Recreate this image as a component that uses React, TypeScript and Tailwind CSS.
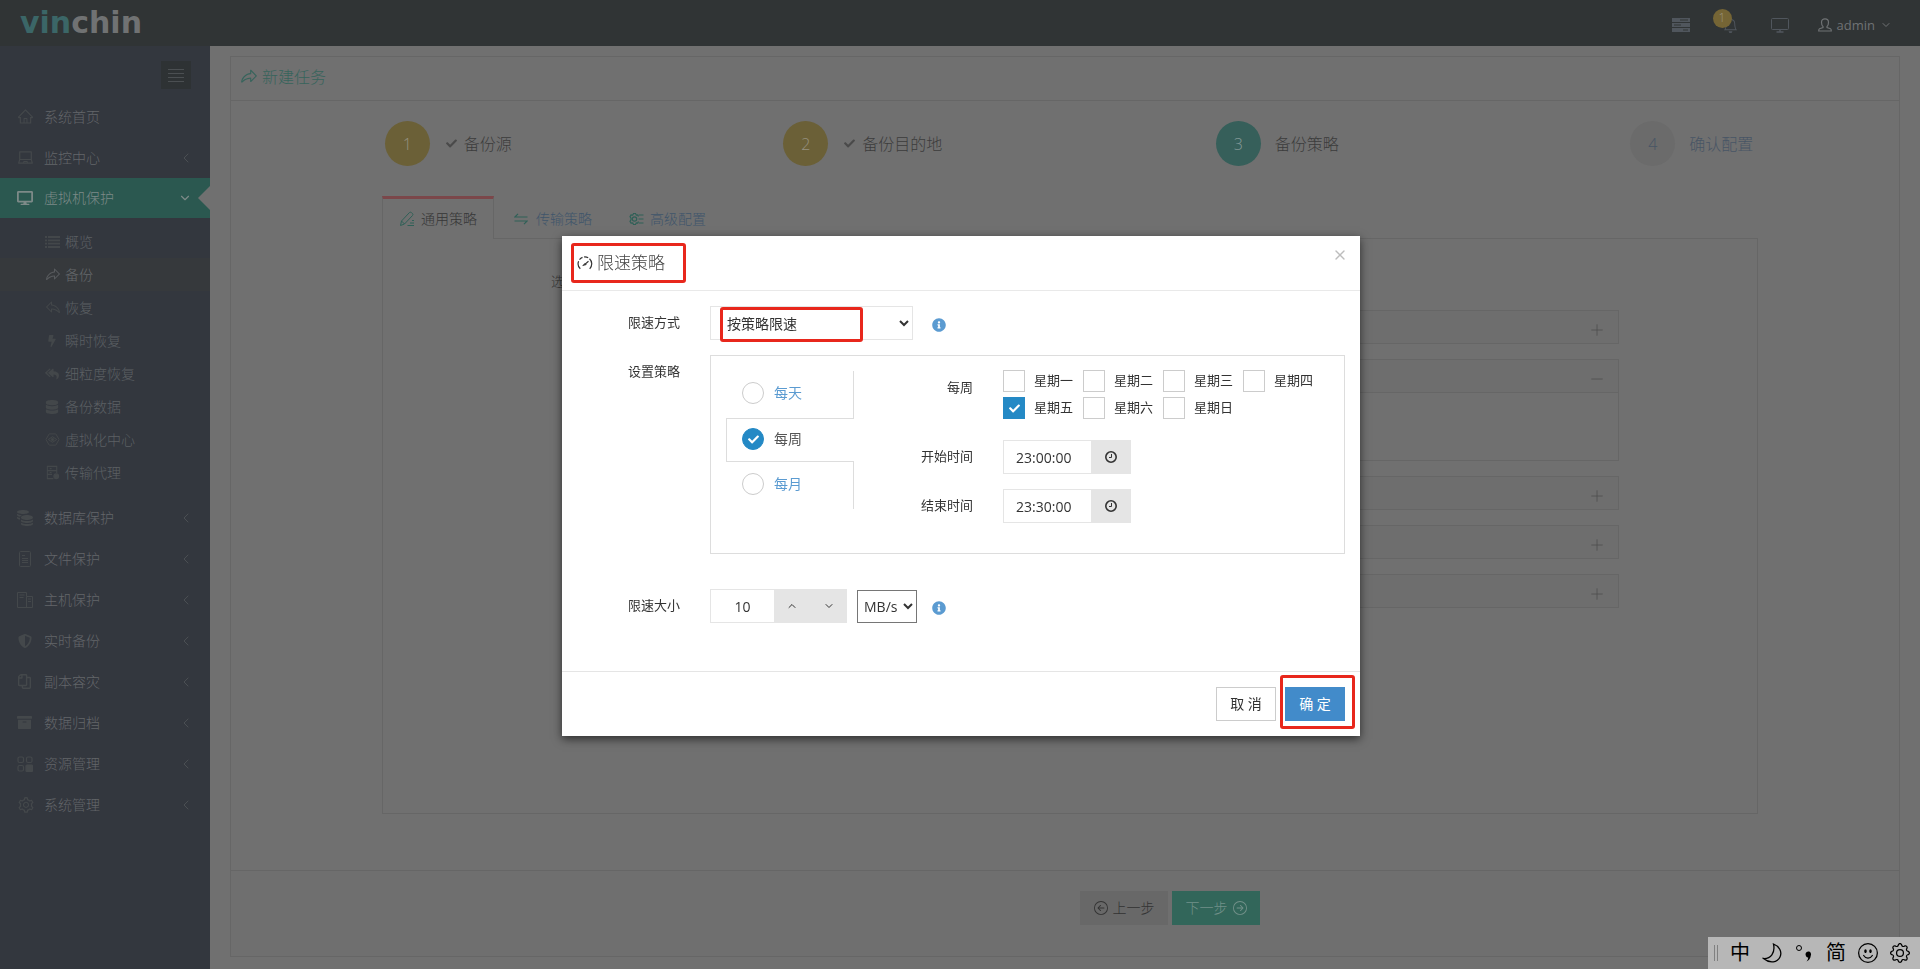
import { useState } from 'react';
import type { ReactNode } from 'react';
import { ChevronDown, ChevronLeft, ChevronUp, Minus, Plus, X } from 'lucide-react';
import { AiOutlineHome, AiOutlineLaptop, AiOutlineSetting } from 'react-icons/ai';
import { BsArrowLeftCircle, BsArrowRightCircle, BsBell, BsEmojiSmile, BsGear } from 'react-icons/bs';
import {
  FaArchive,
  FaBolt,
  FaCheck,
  FaCoins,
  FaDatabase,
  FaDesktop,
  FaInfoCircle,
  FaRegCopy,
  FaReplyAll,
  FaShieldAlt,
} from 'react-icons/fa';
import { PiShareFat } from 'react-icons/pi';

interface NavItem {
  label: string;
  icon: ReactNode;
}

function ServerIcon() {
  return (
    <svg viewBox="0 0 18 14" className="w-[18px] h-[14px]" fill="currentColor">
      <path d="M0 0h18v4H0zM0 5h18v4H0zM0 10h18v4H0z" />
      <path d="M8 2h8M2 7h7M11 12h5" stroke="#303435" strokeWidth="1" />
    </svg>
  );
}

function MonitorIcon() {
  return (
    <svg viewBox="0 0 18 15" className="w-[18px] h-[15px]" fill="none" stroke="currentColor">
      <rect x="0.5" y="0.5" width="17" height="11" rx="1" />
      <path d="M5.500 14h7M9 11.500V14" strokeWidth="1.500" />
    </svg>
  );
}

function UserIcon() {
  return (
    <svg viewBox="0 0 14 14" className="size-[14px]" fill="none" stroke="currentColor" strokeWidth="1.200">
      <path d="M5 8.500C3.800 7.500 3.500 6 3.500 4.200 3.500 2 5 .8 7 .8s3.500 1.200 3.500 3.400c0 1.800-.3 3.300-1.500 4.300v1l3.500 1.200c.6.3.8 1 .8 2.300H.7c0-1.300.2-2 .8-2.300L5 9.500z" />
    </svg>
  );
}

function ListIcon() {
  return (
    <svg viewBox="0 0 15 12" className="w-[15px] h-3" stroke="currentColor" strokeWidth="1.800">
      <path d="M0 1h2M0 4.300h2M0 7.600h2M0 11h2M3 1h12M3 4.300h12M3 7.600h12M3 11h12" />
    </svg>
  );
}

function HexIcon() {
  return (
    <svg viewBox="0 0 16 16" className="size-[15px]" fill="none" stroke="currentColor">
      <path d="M4.500 2h7L15 8l-3.500 6h-7L1 8z" />
      <path d="M3.500 8 8 5l4.500 3L8 11z" />
      <circle cx="8" cy="8" r="1.200" fill="currentColor" />
    </svg>
  );
}

function AgentIcon() {
  return (
    <svg viewBox="0 0 16 16" className="size-[15px]" fill="none" stroke="currentColor" strokeWidth="1.200">
      <path d="M9 14.500H2.500v-13h10v7M2.500 6h10M2.500 10h5M5 3.800h2M5 8h2" />
      <circle cx="12" cy="12" r="2.500" fill="currentColor" />
    </svg>
  );
}

function FileIcon() {
  return (
    <svg viewBox="0 0 16 16" className="size-4" fill="none" stroke="currentColor">
      <rect x="2.500" y=".5" width="11" height="15" rx="1" />
      <path d="M5 4.500h3M5 7.500h6M5 9.500h6M5 11.500h6" />
    </svg>
  );
}

function HostIcon() {
  return (
    <svg viewBox="0 0 16 16" className="size-4" fill="none" stroke="currentColor">
      <path d="M10.500 15.500H.5V.5h9v4M2.500 3h5M2.500 5.500h4" />
      <path d="M9.500 4.500h6v11h-6zM11 7h3M11 9.500h3" />
    </svg>
  );
}

function ResourceIcon() {
  return (
    <svg viewBox="0 0 16 16" className="size-4" fill="none" stroke="currentColor" strokeWidth="1.200">
      <rect x="1" y="1" width="5.500" height="5.500" rx="1.500" />
      <rect x="9.500" y="1" width="5.500" height="5.500" rx="1.500" />
      <rect x="1" y="9.500" width="5.500" height="5.500" rx="1.500" />
      <rect x="9" y="9" width="6.500" height="6.500" rx="1" fill="currentColor" />
    </svg>
  );
}

function PencilIcon() {
  return (
    <svg viewBox="0 0 16 16" className="size-4" fill="none" stroke="currentColor">
      <path d="M1.500 14.500 2.500 10 10.500 1.500Q11.500.8 12.500 1.600L13.500 2.600Q14.400 3.600 13.500 4.500L5.500 13zM2.500 10l3 3" />
      <path d="M8.500 14.500h6.500M11 12h4M13 9.500h2" />
    </svg>
  );
}

function TransferIcon() {
  return (
    <svg viewBox="0 0 14 12" className="w-[14px] h-3" fill="none" stroke="currentColor" strokeWidth="1.200">
      <path d="M4 .8.800 4H13.500M10 11.200 13.200 8H.5" />
    </svg>
  );
}

function GearListIcon() {
  return (
    <svg viewBox="0 0 16 14" className="w-4 h-[14px]" fill="none" stroke="currentColor" strokeWidth="1.200">
      <path d="M10.500 4.500 9.800 3 8.300 3.200 7.500 1.500h-2L4.700 3.200 3 3 2 4.800 3 6.200v1.600L2 9.200 3 11l1.700-.2.800 1.700h2l.8-1.700 1.500.2.700-1.500" />
      <circle cx="6.500" cy="7" r="2.200" />
      <path d="M11 3h4.500M10.500 7h5M11 11h4.500" />
    </svg>
  );
}

function GaugeIcon() {
  return (
    <svg viewBox="0 0 16 14" className="w-4 h-[14px]" fill="none" stroke="currentColor" strokeWidth="1.200">
      <path d="M3.300 12.800A7 7 0 0 1 1.600 5.200M2.500 3.600A7 7 0 0 1 5.500 1.400M7 1A7 7 0 0 1 11.200 1.800M12.500 2.700A7 7 0 0 1 12.700 12.800" />
      <path d="M11.500 5.200 7.800 8.400" />
      <path d="M5.800 9.600 8 7.400l1.200 1.200z" fill="currentColor" strokeWidth="0.800" />
    </svg>
  );
}

function ClockIcon() {
  return (
    <svg viewBox="0 0 14 14" className="size-[14px]" fill="none" stroke="currentColor">
      <circle cx="7" cy="7" r="5.200" strokeWidth="1.600" />
      <path d="M7.500 4v3.500H5" />
    </svg>
  );
}

function MoonIcon() {
  return (
    <svg viewBox="0 0 20 20" className="size-5" fill="none" stroke="currentColor" strokeWidth="1.300">
      <path d="M11.500 1C17 3 20.500 8.500 18 14S8 21 1.500 15.500C8.500 16 13.500 10 11.500 1z" />
    </svg>
  );
}

const topItems: NavItem[] = [
  { label: '系统首页', icon: <AiOutlineHome className="size-[17px]" /> },
  { label: '监控中心', icon: <AiOutlineLaptop className="size-[17px]" /> },
];

const subItems: NavItem[] = [
  { label: '概览', icon: <ListIcon /> },
  { label: '备份', icon: <PiShareFat className="size-4" /> },
  { label: '恢复', icon: <PiShareFat className="size-4 -scale-x-100" /> },
  { label: '瞬时恢复', icon: <FaBolt className="size-3 ml-px" /> },
  { label: '细粒度恢复', icon: <FaReplyAll className="size-[14px]" /> },
  { label: '备份数据', icon: <FaDatabase className="size-[14px]" /> },
  { label: '虚拟化中心', icon: <HexIcon /> },
  { label: '传输代理', icon: <AgentIcon /> },
];

const bottomItems: NavItem[] = [
  { label: '数据库保护', icon: <FaCoins className="size-4 -scale-x-100" /> },
  { label: '文件保护', icon: <FileIcon /> },
  { label: '主机保护', icon: <HostIcon /> },
  { label: '实时备份', icon: <FaShieldAlt className="size-[14px] ml-px" /> },
  { label: '副本容灾', icon: <FaRegCopy className="size-[15px] -scale-x-100" /> },
  { label: '数据归档', icon: <FaArchive className="size-[15px]" /> },
  { label: '资源管理', icon: <ResourceIcon /> },
  { label: '系统管理', icon: <AiOutlineSetting className="size-[18px]" /> },
];

function Header() {
  return (
    <header className="h-[46px] bg-[#303435] flex items-center justify-between pl-5 pr-7">
      <a href="#" className="font-['DejaVu_Sans',sans-serif] font-bold text-[30px] leading-none text-[#707273]">
        <span className="text-[#3b6667]">vin</span>chin
      </a>
      <nav className="flex items-center text-[#50565d] pt-1">
        <button aria-label="任务队列" className="mr-[33px]"><ServerIcon /></button>
        <button aria-label="通知" className="relative mr-[33px]">
          <BsBell className="size-[15px]" />
          <span className="absolute -top-[9px] -left-[10px] size-[19px] rounded-full bg-[#756535] text-[#9a947c] text-xs leading-[18px] text-center">1</span>
        </button>
        <button aria-label="大屏" className="mr-[29px]"><MonitorIcon /></button>
        <button className="flex items-center gap-[5px] text-[13px] leading-5 font-normal text-[#6f7274]">
          <UserIcon />
          admin
          <ChevronDown className="size-3" />
        </button>
      </nav>
    </header>
  );
}

function MenuRow({ item, arrow = true }: { item: NavItem; arrow?: boolean }) {
  return (
    <a href="#" className="h-[41px] flex items-center pl-[17px] pr-4 text-[#63666a]">
      <span className="w-[27px] flex text-[#44484b]">{item.icon}</span>
      <span className="flex-1">{item.label}</span>
      {arrow && <ChevronLeft className="size-4 text-[#4b4f53]" strokeWidth={1.5} />}
    </a>
  );
}

function Sidebar() {
  return (
    <aside className="w-[210px] shrink-0 bg-[#33373e] text-sm leading-5">
      <div className="h-[50px] pt-[15px] pr-[19px] flex justify-end">
        <button aria-label="收起菜单" className="w-[30px] h-7 bg-[#2e3234] flex flex-col items-center justify-center gap-[3px]">
          <span className="w-4 h-px bg-[#4b4f52]" />
          <span className="w-4 h-px bg-[#4b4f52]" />
          <span className="w-4 h-px bg-[#4b4f52]" />
          <span className="w-4 h-px bg-[#4b4f52]" />
        </button>
      </div>
      <nav>
        <MenuRow item={topItems[0]} arrow={false} />
        <MenuRow item={topItems[1]} />
        <a href="#" className="relative h-10 flex items-center pl-[17px] pr-[18px] bg-[#2b5850] text-[#7d8a88]">
          <span className="w-[27px]"><FaDesktop className="size-4" /></span>
          <span className="flex-1">虚拟机保护</span>
          <ChevronDown className="size-[14px]" />
          <span className="absolute right-0 top-2 border-y-[12px] border-y-transparent border-r-[12px] border-r-[#707070]" />
        </a>
        <div className="pt-[7px] pb-2">
          {subItems.map((item) => (
            <a
              key={item.label}
              href="#"
              className={`h-[33px] flex items-center pl-[44px] ${item.label === '备份' ? 'bg-[#36393c] text-[#66696c]' : 'text-[#5c6064]'}`}
            >
              <span className={`w-[21px] flex pl-px ${item.label === '备份' ? 'text-[#585b5e]' : 'text-[#43474a]'}`}>{item.icon}</span>
              {item.label}
            </a>
          ))}
        </div>
        {bottomItems.map((item) => (
          <MenuRow key={item.label} item={item} />
        ))}
      </nav>
    </aside>
  );
}

function Steps() {
  return (
    <ol className="grid grid-cols-4 pl-[10px] pt-5 text-base text-[#3c3c3c]">
      <li className="flex items-center justify-center">
        <span className="size-[45px] rounded-full bg-[#6b6037] text-[#969180] flex items-center justify-center">1</span>
        <FaCheck className="size-[11px] ml-4 mr-[7px] text-[#4a4a4a]" />
        备份源
      </li>
      <li className="flex items-center justify-center">
        <span className="size-[45px] rounded-full bg-[#6b6037] text-[#969180] flex items-center justify-center">2</span>
        <FaCheck className="size-[11px] ml-4 mr-[7px] text-[#4a4a4a]" />
        备份目的地
      </li>
      <li className="flex items-center justify-center gap-[14px]">
        <span className="size-[45px] rounded-full bg-[#365f5a] text-[#869b99] flex items-center justify-center">3</span>
        备份策略
      </li>
      <li className="flex items-center justify-center gap-[14px] text-[#485565]">
        <span className="size-[45px] rounded-full bg-[#6b6b6b] flex items-center justify-center">4</span>
        确认配置
      </li>
    </ol>
  );
}

function FoldPanel({ open = false }: { open?: boolean }) {
  return (
    <div className="border border-[#666666] bg-[#6e6e6e]">
      <button aria-label={open ? '收起' : '展开'} className="w-full h-8 flex items-center justify-end pr-3 pt-[6px] text-[#4b4b4b]">
        {open ? <Minus className="size-[18px]" strokeWidth={1} /> : <Plus className="size-[18px]" strokeWidth={1} />}
      </button>
      {open && <div className="h-[68px] border-t border-[#666666] bg-[#707070]" />}
    </div>
  );
}

function TaskPage() {
  return (
    <main className="flex-1 flex flex-col bg-[#707070] pt-[10px] pb-3 pl-5 pr-5">
      <section className="flex-1 flex flex-col border border-[#666666]">
        <h1 className="h-11 flex items-center gap-1 pl-[9px] pb-1 border-b border-[#666666] text-base text-[#37645c]">
          <PiShareFat className="size-[18px]" />
          新建任务
        </h1>
        <Steps />
        <div className="flex-1 flex flex-col ml-[151px] mr-[141px] mt-[30px] mb-14 text-sm leading-5">
          <div className="flex items-stretch h-[43px]">
            <button className="w-[112px] border-t-[3px] border-x border-t-[#7b474a] border-x-[#666666] flex items-center justify-center gap-[6px] text-[#363636]">
              <span className="text-[#2f6057]"><PencilIcon /></span>
              通用策略
            </button>
            <div className="flex-1 flex gap-9 border-b border-[#666666] pl-5 pt-[3px] text-[#3f556b]">
              <button className="flex items-center gap-2"><span className="text-[#2f6057]"><TransferIcon /></span>传输策略</button>
              <button className="flex items-center gap-[6px]"><span className="text-[#2f6057]"><GearListIcon /></span>高级配置</button>
            </div>
          </div>
          <div className="flex-1 border-x border-b border-[#666666] pt-8">
            <p className="pl-[168px] text-[13px] text-[#333333]">选择策略</p>
            <div className="flex flex-col gap-[15px] mt-[19px] ml-[248px] mr-[138px]">
              <FoldPanel />
              <FoldPanel open />
              <FoldPanel />
              <FoldPanel />
              <FoldPanel />
            </div>
          </div>
        </div>
        <footer className="h-[86px] flex items-start justify-center gap-1 pt-5 pl-[210px] border-t border-[#666666] bg-[#6f6f6f] text-sm">
          <button className="w-[88px] h-[34px] flex items-center justify-center gap-[5px] bg-[#686868] text-[#333333]">
            <BsArrowLeftCircle className="size-[14px]" />
            上一步
          </button>
          <button className="w-[88px] h-[34px] flex items-center justify-center gap-[5px] bg-[#32665a] text-[#73918a]">
            下一步
            <BsArrowRightCircle className="size-[14px]" />
          </button>
        </footer>
      </section>
    </main>
  );
}

// Outline drawn round the parts of the form that need attention
function Highlight({ className }: { className: string }) {
  return <span className={`absolute pointer-events-none border-[3px] border-[#e8271c] rounded-[3px] ${className}`} />;
}

function TimeField({ id, label, value }: { id: string; label: string; value: string }) {
  return (
    <div className="flex items-center">
      <label htmlFor={id} className="w-[119px] text-right text-[13px]">{label}</label>
      <input id={id} defaultValue={value} className="ml-[30px] w-[88px] h-[34px] border border-r-0 border-[#e5e5e5] pl-3 text-sm outline-none" />
      <button aria-label={label} className="w-10 h-[34px] bg-[#e5e5e5] flex items-center justify-center"><ClockIcon /></button>
    </div>
  );
}

function SpeedLimitDialog() {
  const [period, setPeriod] = useState('每周');
  const [days, setDays] = useState(['星期五']);
  const [speed, setSpeed] = useState(10);

  const toggleDay = (day: string) => {
    setDays((prev) => (prev.includes(day) ? prev.filter((d) => d !== day) : [...prev, day]));
  };

  return (
    <div className="fixed inset-0 flex items-start justify-center pt-[236px] pl-[2px]">
      <div role="dialog" aria-labelledby="dialog-title" className="w-[798px] bg-white font-normal text-[#333333] shadow-[0_3px_9px_rgba(0,0,0,0.6)]">
        <div className="relative h-[55px] flex items-center justify-between pl-[15px] pr-3 border-b border-[#e9e9e9]">
          <h2 id="dialog-title" className="flex items-center gap-1 text-[17px] leading-6 font-light text-[#444444]">
            <span className="text-[#333333]"><GaugeIcon /></span>
            限速策略
          </h2>
          <Highlight className="left-[9px] top-[7px] w-[115px] h-10" />
          <button aria-label="关闭" className="pb-4 text-[#bdbdbd]"><X className="size-4" strokeWidth={2} /></button>
        </div>

        <div className="pt-[15px] pl-[66px] pr-[15px] h-[380px]">
          <div className="relative flex items-center">
            <label htmlFor="limit-mode" className="w-[82px] text-[13px]">限速方式</label>
            <select id="limit-mode" className="w-[203px] h-[34px] border border-[#e5e5e5] bg-white pl-3 text-sm outline-none">
              <option>按策略限速</option>
              <option>永久限速</option>
            </select>
            <Highlight className="left-[92px] top-px w-[143px] h-[35px]" />
            <FaInfoCircle className="ml-[19px] mt-[3px] size-[14px] text-[#5b9bd1]" />
          </div>

          <div className="flex items-start mt-[15px]">
            <span className="w-[82px] pt-[6px] text-[13px] leading-5">设置策略</span>
            <div className="flex-1 h-[199px] border border-[#dddddd] flex p-[15px]">
              <div className="w-32 text-sm">
                {periods.map((name) => (
                  <label
                    key={name}
                    className={`flex items-center gap-[10px] border-[#dddddd] ${
                      period === name
                        ? 'h-11 pl-[15px] pb-[2px] border-y border-l text-[#555555]'
                        : 'h-[47px] pl-4 pb-1 border-r text-[#5b9bd1]'
                    }`}
                  >
                    <span className="grid place-items-center">
                      <input
                        type="radio"
                        name="period"
                        checked={period === name}
                        onChange={() => setPeriod(name)}
                        className="col-start-1 row-start-1 appearance-none size-[22px] rounded-full border border-[#cccccc] checked:border-[#2489c5] checked:bg-[#2489c5]"
                      />
                      {period === name && <FaCheck className="col-start-1 row-start-1 size-[11px] text-white pointer-events-none" />}
                    </span>
                    {name}
                  </label>
                ))}
              </div>

              <div className="flex-1 flex flex-col">
                <div className="flex -mt-px">
                  <span className="w-[119px] pt-[7px] text-right text-[13px] leading-5">每周</span>
                  <div className="ml-[30px] grid grid-cols-[repeat(4,80px)] gap-y-[5px]">
                    {weekDays.map((day) => (
                      <label key={day} className="flex items-center gap-[9px] text-[13px]">
                        <span className="grid place-items-center">
                          <input
                            type="checkbox"
                            checked={days.includes(day)}
                            onChange={() => toggleDay(day)}
                            className="col-start-1 row-start-1 appearance-none size-[22px] border border-[#cccccc] checked:border-[#2489c5] checked:bg-[#2489c5]"
                          />
                          {days.includes(day) && <FaCheck className="col-start-1 row-start-1 size-[11px] text-white pointer-events-none" />}
                        </span>
                        {day}
                      </label>
                    ))}
                  </div>
                </div>
                <div className="flex flex-col gap-[15px] mt-[21px]">
                  <TimeField id="start-time" label="开始时间" value="23:00:00" />
                  <TimeField id="end-time" label="结束时间" value="23:30:00" />
                </div>
              </div>
            </div>
          </div>

          <div className="flex items-center mt-[35px]">
            <label htmlFor="limit-size" className="w-[82px] text-[13px]">限速大小</label>
            <input
              id="limit-size"
              value={speed}
              onChange={(e) => setSpeed(Number(e.target.value) || 0)}
              className="w-16 h-[34px] border border-r-0 border-[#e5e5e5] text-center text-sm outline-none"
            />
            <button aria-label="增加" onClick={() => setSpeed(speed + 1)} className="w-9 h-[34px] bg-[#e5e5e5] flex items-center justify-center">
              <ChevronUp className="size-3" />
            </button>
            <button aria-label="减少" onClick={() => setSpeed(Math.max(0, speed - 1))} className="w-[37px] h-[34px] bg-[#e5e5e5] flex items-center justify-center">
              <ChevronDown className="size-3" />
            </button>
            <select aria-label="单位" className="ml-[10px] w-[60px] h-[33px] border border-[#767676] bg-white pl-[2px] text-sm outline-none">
              <option>MB/s</option>
              <option>KB/s</option>
            </select>
            <FaInfoCircle className="ml-[15px] mt-[3px] size-[14px] text-[#5b9bd1]" />
          </div>
        </div>

        <div className="h-[65px] flex items-center justify-end gap-[9px] pr-[15px] border-t border-[#e5e5e5] text-sm">
          <button className="w-[60px] h-[34px] border border-[#cccccc] text-[#333333]">取 消</button>
          <span className="relative">
            <button className="w-[60px] h-[34px] bg-[#428bca] text-white">确 定</button>
            <Highlight className="-left-[5px] -top-3 w-[75px] h-[54px]" />
          </span>
        </div>
      </div>
    </div>
  );
}

const periods = ['每天', '每周', '每月'];
const weekDays = ['星期一', '星期二', '星期三', '星期四', '星期五', '星期六', '星期日'];

function InputMethodBar() {
  return (
    <div className="fixed right-0 bottom-0 w-[212px] h-8 flex items-center gap-3 pl-[6px] bg-[#b7b7b7] text-black text-xl leading-8 font-normal">
      <span className="h-4 w-1 border-x border-[#808080]" />
      <span className="w-5 text-center">中</span>
      <MoonIcon />
      <svg viewBox="0 0 20 20" className="size-5">
        <circle cx="5" cy="5" r="2.500" fill="none" stroke="currentColor" />
        <path d="M11.500 11a2.800 2.800 0 1 1 5.300 1.500c-.3 3-1.800 5-4.300 6 1.200-1.500 1.700-2.800 1.700-4-1.500.2-2.700-1.500-2.700-3.500z" fill="currentColor" />
      </svg>
      <span className="w-5 text-center">简</span>
      <BsEmojiSmile className="size-5" />
      <BsGear className="size-5" />
    </div>
  );
}

export default function App() {
  return (
    <div className="min-h-screen flex flex-col font-['Open_Sans','Noto_Sans_CJK_SC',sans-serif] font-light">
      <Header />
      <div className="flex-1 flex">
        <Sidebar />
        <TaskPage />
      </div>
      <SpeedLimitDialog />
      <InputMethodBar />
    </div>
  );
}
